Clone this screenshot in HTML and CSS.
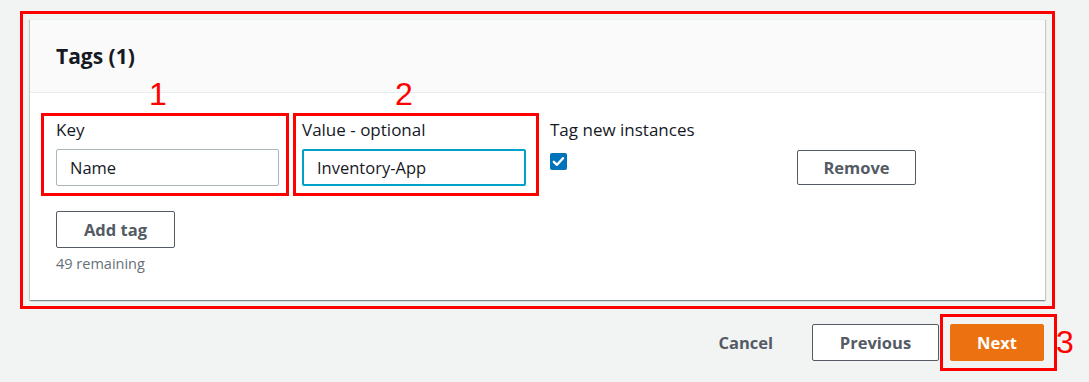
FILE: index.html
```html
<!DOCTYPE html>
<html lang="en">
<head>
    <meta charset="UTF-8">
    <meta name="viewport" content="width=device-width, initial-scale=1.0">
    <title>Tags</title>
    <link rel="stylesheet" href="styles.css">
</head>
<body>
    <div class="mark mark-panel">
        <section class="card">
            <header class="card-header">
                <h2>Tags (1)</h2>
            </header>
            <div class="card-body">
                <div class="tag-row">
                    <div class="mark field field-key">
                        <span class="step step-1">1</span>
                        <label for="tag-key">Key</label>
                        <input id="tag-key" type="text" value="Name">
                    </div>
                    <div class="mark field field-value">
                        <span class="step step-2">2</span>
                        <label for="tag-value">Value - optional</label>
                        <input id="tag-value" class="focused" type="text" value="Inventory-App">
                    </div>
                    <div class="field-tag">
                        <label>Tag new instances</label>
                        <span class="checkbox">
                            <svg width="17" height="17" viewBox="0 0 17 17">
                                <rect x="0" y="0" width="17" height="17" rx="2" fill="#0073bb"/>
                                <path d="M3.8 8.8 L7 11.8 L13 5.2" fill="none" stroke="#fff" stroke-width="2.4" stroke-linecap="round" stroke-linejoin="round"/>
                            </svg>
                        </span>
                    </div>
                    <button class="btn btn-remove">Remove</button>
                </div>
                <button class="btn btn-add">Add tag</button>
                <div class="hint">49 remaining</div>
            </div>
        </section>
    </div>

    <div class="actions">
        <button class="btn-link">Cancel</button>
        <button class="btn btn-previous">Previous</button>
        <div class="mark mark-next">
            <button class="btn btn-primary">Next</button>
            <span class="step step-3">3</span>
        </div>
    </div>
</body>
</html>
```

FILE: styles.css
```css
/* General Styling */
* {
    margin: 0;
    padding: 0;
    box-sizing: border-box;
    font-family: 'Open Sans', 'Noto Sans', sans-serif;
}

body {
    background-color: #f2f3f3;
    padding: 11px 34px 0 20px;
    color: #16191f;
}

/* Red annotation boxes */
.mark {
    border: 3px solid #ff0000;
    position: relative;
}

.mark-panel {
    padding: 5px 7px 6px 7px;
    margin-bottom: 5px;
}

.step {
    position: absolute;
    font-family: 'Liberation Sans', Arial, sans-serif;
    font-size: 32px;
    line-height: 32px;
    color: #ff0000;
}

.step-1 {
    top: -38px;
    left: 105px;
}

.step-2 {
    top: -38px;
    left: 99px;
}

.step-3 {
    top: 9px;
    left: calc(100% + 2px);
}

/* Card */
.card {
    background: #ffffff;
    border-top: 1px solid #eaeded;
    box-shadow: 0 1px 1px 0 rgba(0, 28, 36, 0.3), 1px 1px 1px 0 rgba(0, 28, 36, 0.15), -1px 1px 1px 0 rgba(0, 28, 36, 0.15);
}

.card-header {
    background: #fafafa;
    border-bottom: 1px solid #eaeded;
    padding: 22px 26px;
}

.card-header h2 {
    font-size: 21px;
    line-height: 28px;
    font-weight: 700;
}

.card-body {
    padding: 20px 20px 26px 11px;
}

/* Tag row */
.tag-row {
    display: flex;
    align-items: flex-start;
}

.field label,
.field-tag label {
    display: block;
    font-size: 17px;
    line-height: 22px;
}

.field input {
    display: block;
    width: 100%;
    height: 37px;
    font-size: 16.5px;
    color: #16191f;
    border: 1px solid #aab7b8;
    border-radius: 2px;
    padding: 0 13px;
    margin-top: 8px;
    background: #ffffff;
    outline: none;
}

.field input.focused {
    border: 2px solid #00a1c9;
}

.field-key {
    width: 248px;
    padding: 3px 7px 7px 12px;
}

.field-value {
    width: 246px;
    margin-left: 4px;
    padding: 3px 10px 7px 6px;
}

.field-tag {
    width: 247px;
    margin-left: 11px;
    padding-top: 6px;
}

.checkbox {
    display: block;
    width: 17px;
    height: 17px;
    margin-top: 12px;
}

.checkbox svg {
    display: block;
}

/* Buttons */
.btn {
    height: 37px;
    padding: 0 25px;
    border: 1px solid #545b64;
    border-radius: 2px;
    background: #ffffff;
    color: #545b64;
    font-size: 16.5px;
    font-weight: 700;
    cursor: pointer;
}

.btn-remove {
    width: 119px;
    height: 35px;
    padding: 0;
    margin-top: 37px;
}

.btn-add {
    display: block;
    width: 119px;
    padding: 0;
    margin: 15px 0 0 15px;
}

.hint {
    margin: 6px 0 0 15px;
    font-size: 14.5px;
    line-height: 20px;
    color: #687078;
}

/* Footer actions */
.actions {
    display: flex;
    justify-content: flex-end;
    align-items: center;
    margin-right: -2px;
}

.btn-link {
    border: none;
    background: none;
    padding: 0 20px;
    margin-right: 19px;
    color: #545b64;
    font-size: 16.5px;
    font-weight: 700;
    cursor: pointer;
}

.btn-previous {
    width: 127px;
    padding: 0;
    margin-right: 1px;
}

.mark-next {
    padding: 7px 10px 7px 7px;
}

.btn-primary {
    display: block;
    width: 94px;
    padding: 0;
    background: #ec7211;
    border-color: #ec7211;
    color: #ffffff;
}
```
